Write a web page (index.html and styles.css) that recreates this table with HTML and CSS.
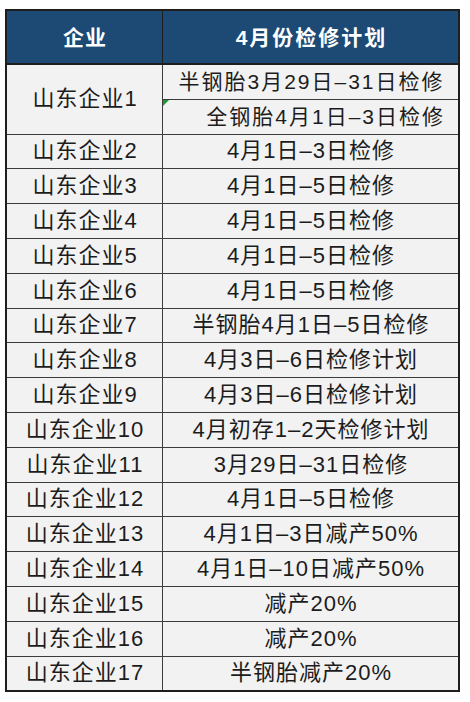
FILE: index.html
```html
<!DOCTYPE html>
<html lang="zh">
<head>
<meta charset="utf-8">
<link rel="stylesheet" href="styles.css">
</head>
<body>
<table class="plan">
  <thead>
    <tr class="head-row"><th class="col-a">企业</th><th class="col-b">4月份检修计划</th></tr>
  </thead>
  <tbody>
    <tr><td class="name" rowspan="2">山东企业1</td><td class="plan-text small">半钢胎3月29日–31日检修</td></tr>
    <tr><td class="plan-text small right flagged">全钢胎4月1日–3日检修<span class="flag"></span></td></tr>
    <tr><td class="name">山东企业2</td><td class="plan-text">4月1日–3日检修</td></tr>
    <tr><td class="name">山东企业3</td><td class="plan-text">4月1日–5日检修</td></tr>
    <tr><td class="name">山东企业4</td><td class="plan-text">4月1日–5日检修</td></tr>
    <tr><td class="name">山东企业5</td><td class="plan-text">4月1日–5日检修</td></tr>
    <tr><td class="name">山东企业6</td><td class="plan-text">4月1日–5日检修</td></tr>
    <tr><td class="name">山东企业7</td><td class="plan-text">半钢胎4月1日–5日检修</td></tr>
    <tr><td class="name">山东企业8</td><td class="plan-text">4月3日–6日检修计划</td></tr>
    <tr><td class="name">山东企业9</td><td class="plan-text">4月3日–6日检修计划</td></tr>
    <tr><td class="name">山东企业10</td><td class="plan-text">4月初存1–2天检修计划</td></tr>
    <tr><td class="name">山东企业11</td><td class="plan-text">3月29日–31日检修</td></tr>
    <tr><td class="name">山东企业12</td><td class="plan-text">4月1日–5日检修</td></tr>
    <tr><td class="name">山东企业13</td><td class="plan-text">4月1日–3日减产50%</td></tr>
    <tr><td class="name">山东企业14</td><td class="plan-text">4月1日–10日减产50%</td></tr>
    <tr><td class="name">山东企业15</td><td class="plan-text">减产20%</td></tr>
    <tr><td class="name">山东企业16</td><td class="plan-text">减产20%</td></tr>
    <tr><td class="name">山东企业17</td><td class="plan-text">半钢胎减产20%</td></tr>
  </tbody>
</table>
</body>
</html>
```
FILE: styles.css
```css
html, body {
  margin: 0;
  padding: 0;
  background: #ffffff;
}
body {
  padding: 9px 0 0 5px;
  font-family: "Liberation Sans", "Noto Sans CJK SC", sans-serif;
}
.plan {
  border-collapse: collapse;
  width: 455px;
  table-layout: fixed;
  border: 2px solid #1e1e1e;
}
.plan th,
.plan td {
  border: 1px solid #3c3c3c;
  padding: 0;
  text-align: center;
  vertical-align: middle;
  white-space: nowrap;
  line-height: 1;
}
.col-a { width: 154px; }
.head-row th {
  height: 52px;
  background: #1c4a75;
  color: #ffffff;
  font-weight: 700;
  font-size: 21px;
  letter-spacing: 1px;
  padding-left: 1px;
  border-color: #1e1e1e;
  border-bottom: 2px solid #1e1e1e;
}
.head-row .col-b {
  letter-spacing: 2px;
  padding-left: 2px;
}
.plan td {
  height: 33.8px;
  background: #f2f2f2;
  color: #1c1c1c;
}
.plan td.name {
  font-size: 22px;
  letter-spacing: 1px;
  padding-left: 1px;
}
.plan td.plan-text {
  font-size: 22px;
  letter-spacing: 1px;
  padding-left: 1px;
}
.plan td.small {
  font-size: 21px;
  letter-spacing: 2px;
  padding-left: 2px;
}
.plan td.right {
  text-align: right;
  padding-right: 13px;
}
.flagged { position: relative; }
.flag {
  position: absolute;
  left: 0;
  top: 0;
  width: 0;
  height: 0;
  border-top: 6px solid #1d9a2f;
  border-right: 6px solid transparent;
}
```
